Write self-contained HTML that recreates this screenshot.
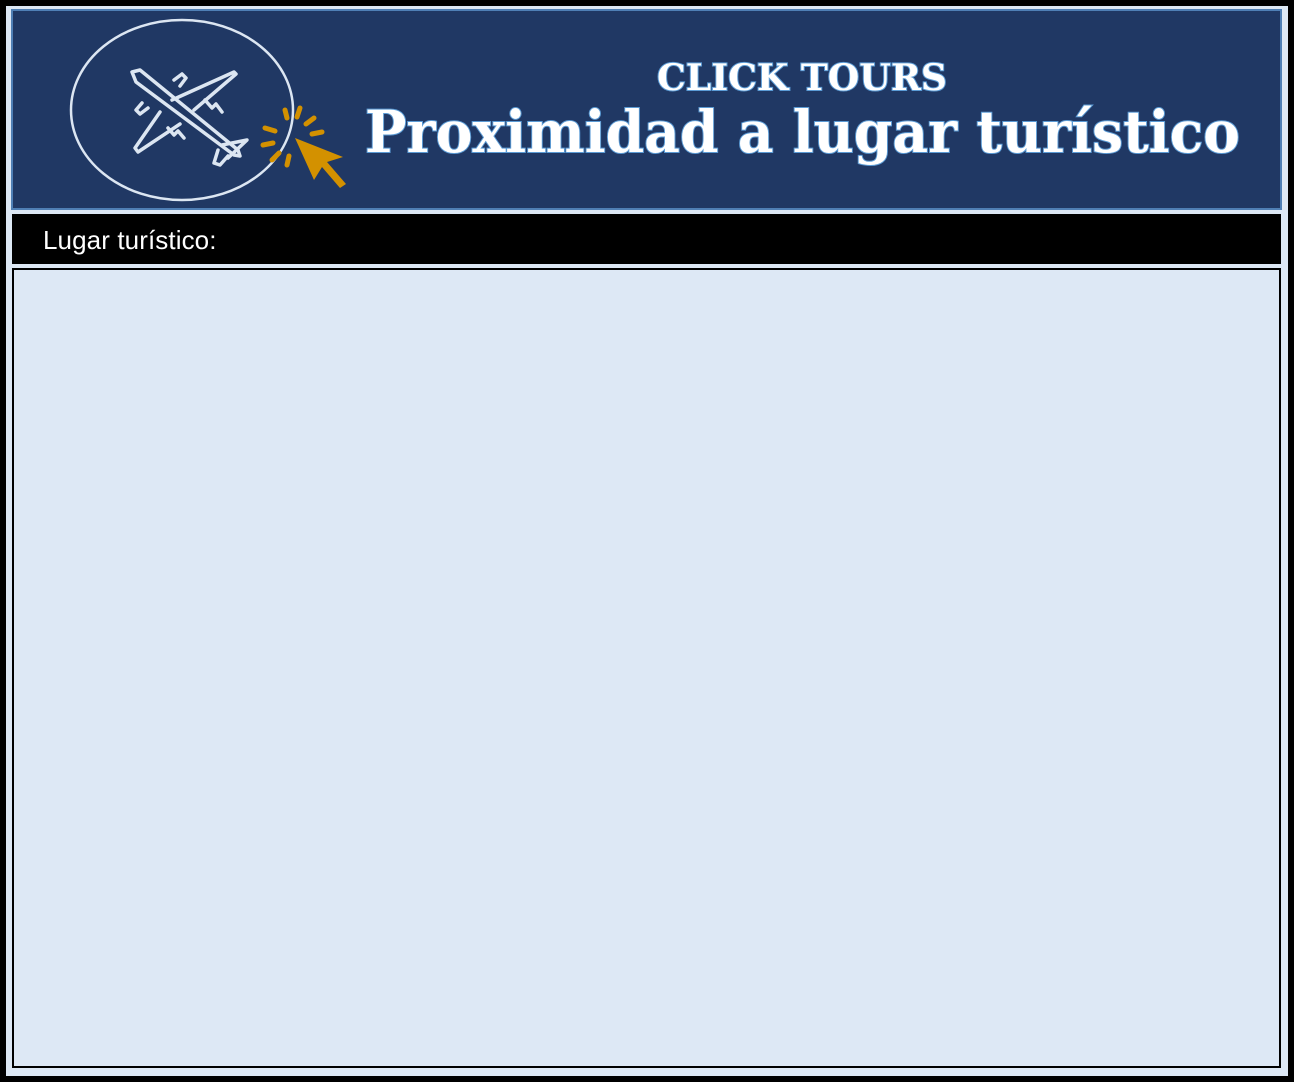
<!DOCTYPE html>
<html><head><meta charset="utf-8"><style>
*{margin:0;padding:0;box-sizing:border-box}
body{width:1294px;height:1082px;background:#000;position:relative;overflow:hidden}
#bg{position:absolute;left:6px;top:6px;width:1282px;height:1070px;background:#dde8f5}
#hdr{position:absolute;left:11px;top:9px;width:1271px;height:201px;background:#203864;border:2px solid #4f7fb5}
#bar{position:absolute;left:12px;top:214px;width:1269px;height:50px;background:#000;color:#fff;font:26px "Liberation Sans",sans-serif;padding:11px 0 0 31px;letter-spacing:0.1px}
#box{position:absolute;left:12px;top:268px;width:1269px;height:800px;border:2px solid #000;background:#dde8f5}
</style></head><body>
<div id="bg"></div>
<div id="hdr"></div>
<svg style="position:absolute;left:0;top:0" width="1294" height="215">
<ellipse cx="182" cy="110" rx="111" ry="90" fill="none" stroke="#dce6f2" stroke-width="2.5"/>
<g fill="none" stroke="#dce6f2" stroke-width="3.5" stroke-linejoin="round" stroke-linecap="round">
<path d="M132 72 L140 70 L238 150 L240 156 L234 155 L136 82 Z"/>
<path d="M172 100 L234 72 L236 74 L194 110"/>
<path d="M160 112 L135 148 L138 152 L180 124"/>
<path d="M174 80 L182 74 L186 78 L180 86"/>
<path d="M142 103 L136 110 L140 114 L148 108"/>
<path d="M222 145 L247 140 L228 158"/>
<path d="M218 150 L214 163 L220 165 L228 156"/>
<path d="M205 100 L212 108 L216 104 L222 112"/>
<path d="M168 128 L174 135 L178 131 L184 138"/>
</g>
<g stroke="#d39100" stroke-width="5" stroke-linecap="round">
<path d="M285 110 L287 118"/><path d="M300 108 L297 117"/><path d="M314 118 L306 124"/>
<path d="M322 132 L312 134"/><path d="M265 128 L275 131"/><path d="M263 145 L273 143"/>
<path d="M272 160 L279 153"/><path d="M287 165 L289 156"/>
</g>
<path d="M295 138 L343 157 L327 162 L346 184 L340 188 L322 167 L314 180 Z" fill="#d39100"/>
<g font-family="'DejaVu Serif','Liberation Serif',serif" font-weight="bold" fill="#fff" stroke="#5b9bd5" stroke-width="2" paint-order="stroke">
<text x="657" y="90" font-size="36" textLength="290" lengthAdjust="spacingAndGlyphs">CLICK TOURS</text>
<text x="365" y="152" font-size="58" textLength="875" lengthAdjust="spacingAndGlyphs">Proximidad a lugar turístico</text>
</g>
</svg>
<div id="bar">Lugar turístico:</div>
<div id="box"></div>
</body></html>
